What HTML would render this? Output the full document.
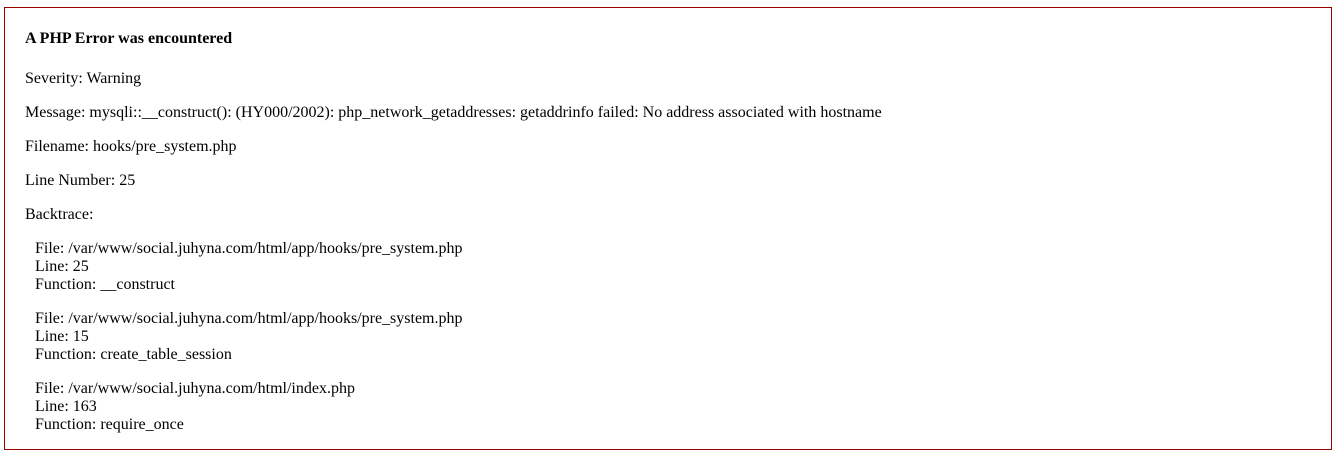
<!DOCTYPE html>
<html>
<head>
<meta charset="utf-8">
<style>
html,body{background:#fff;}
body{margin:7px 4px 0 4px;font-family:"Liberation Serif",serif;font-size:16px;color:#000;}
h4{font-size:16px;margin:1.33em 0;font-weight:bold;line-height:18px;}
p{margin:16px 0;line-height:18px;}
</style>
</head>
<body>
<div style="border:1px solid #990000;padding-left:20px;padding-top:1px;margin:0 0 10px 0;">
<h4>A PHP Error was encountered</h4>
<p>Severity: Warning</p>
<p>Message:  mysqli::__construct(): (HY000/2002): php_network_getaddresses: getaddrinfo failed: No address associated with hostname</p>
<p>Filename: hooks/pre_system.php</p>
<p>Line Number: 25</p>
<p>Backtrace:</p>
<p style="margin-left:10px">
File: /var/www/social.juhyna.com/html/app/hooks/pre_system.php<br>
Line: 25<br>
Function: __construct</p>
<p style="margin-left:10px">
File: /var/www/social.juhyna.com/html/app/hooks/pre_system.php<br>
Line: 15<br>
Function: create_table_session</p>
<p style="margin-left:10px;margin-bottom:15px">
File: /var/www/social.juhyna.com/html/index.php<br>
Line: 163<br>
Function: require_once</p>
</div>
</body>
</html>
